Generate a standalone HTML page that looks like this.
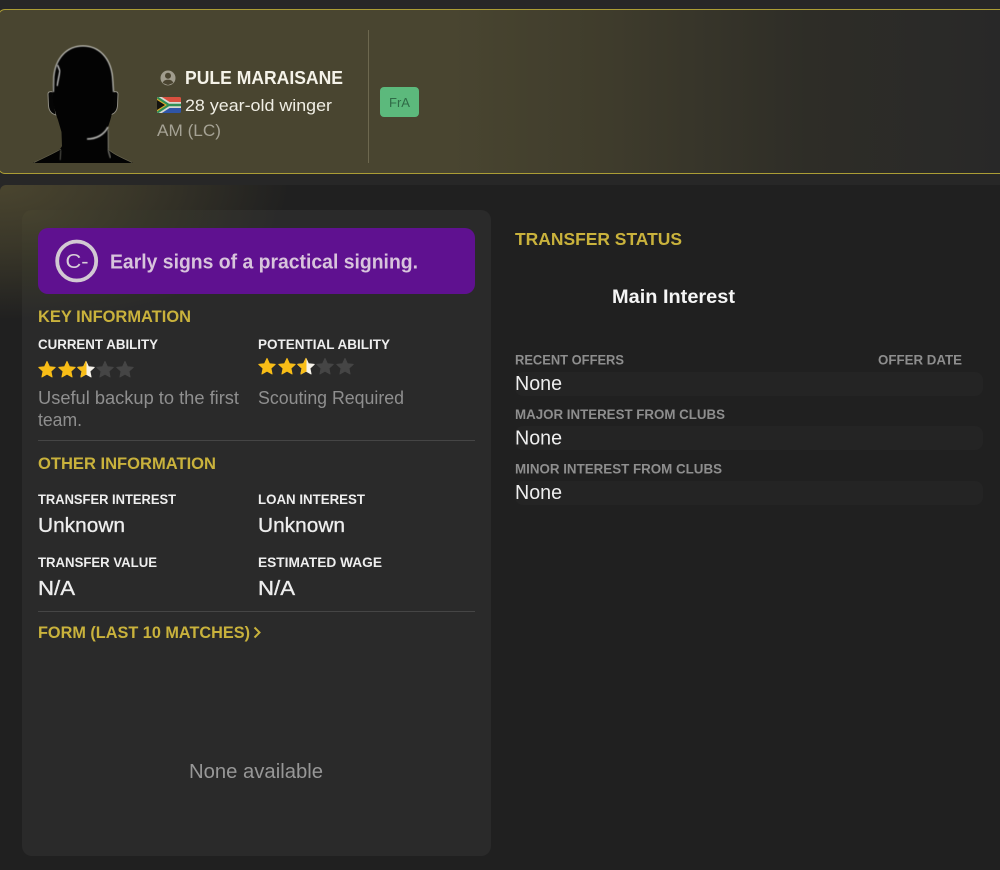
<!DOCTYPE html>
<html><head><meta charset="utf-8"><style>
html,body{margin:0;padding:0;width:1000px;height:870px;overflow:hidden;background:#272727}
.a{position:absolute}
text{font-family:"Liberation Sans",sans-serif}
.b{font-weight:bold}
</style></head><body>
<div class="a" style="left:-2px;top:9px;width:1010px;height:163px;border:1px solid #ab9d35;border-radius:7px;background:linear-gradient(90deg,#494530 0,#494530 45%,#3f3c2c 60%,#2e2d27 80%,#282828 100%)"></div>
<div class="a" style="left:0;top:185px;width:1000px;height:685px;background:radial-gradient(ellipse 290px 135px at 0 0,#4a452f 0,#3a3729 45%,#202020 100%),#202020;border-top-left-radius:6px"></div>
<div class="a" style="left:22px;top:210px;width:469px;height:646px;border-radius:10px;background:radial-gradient(ellipse 260px 110px at 0 0,#47432f 0,#363529 50%,#2a2a2a 100%),#2a2a2a"></div>
<div class="a" style="left:38px;top:228px;width:437px;height:66px;border-radius:10px;background:#5f1190"></div>
<div class="a" style="left:38px;top:440px;width:437px;height:1px;background:#454545"></div>
<div class="a" style="left:38px;top:611px;width:437px;height:1px;background:#454545"></div>
<div class="a" style="left:515px;top:372px;width:468px;height:24px;border-radius:8px;background:#242424"></div>
<div class="a" style="left:515px;top:426px;width:468px;height:24px;border-radius:8px;background:#242424"></div>
<div class="a" style="left:515px;top:481px;width:468px;height:24px;border-radius:8px;background:#242424"></div>
<div class="a" style="left:368px;top:30px;width:1px;height:133px;background:#6d684f"></div>
<div class="a" style="left:380px;top:87px;width:39px;height:30px;border-radius:4px;background:#5cb97c"></div>

<svg class="a" style="left:0;top:0" width="1000" height="870" viewBox="0 0 1000 870">
<defs>
<clipPath id="fl"><rect x="157" y="97" width="24" height="16" rx="1.5"/></clipPath>
<filter id="bl"><feGaussianBlur stdDeviation=".6"/></filter>
<polygon id="st" stroke-linejoin="round" stroke-width="1" points="0,-8.600 2.400,-3.300 8.200,-2.660 3.900,1.260 5.050,6.950 0,4.100 -5.050,6.950 -3.900,1.260 -8.200,-2.660 -2.400,-3.300"/>
<clipPath id="h1"><rect x="-10" y="-10" width="10.500" height="20"/></clipPath>
</defs>

<!-- head -->
<path d="M53 92C50 91 48 92 48 94L48.500 106C49 111 52 114 56 115Z" fill="#050505" stroke="#8f8d82" stroke-width="1"/>
<path d="M113 92C116 91 118 92 118 94L117.500 106C117 111 114 114 110 115Z" fill="#050505" stroke="#8f8d82" stroke-width="1"/>
<path d="M83 46C67 46 55 58 53.500 77L52.500 93C53 104 55 112 58 120L61.500 132 62 146C60 151 52 154 33 163H133C119 157 111 153 108 148L107.500 128C110 122 112 115 113 106L114 93 112.500 77C111 58 99 46 83 46Z" fill="#030303"/>
<path d="M53.500 92L53.800 77C55.500 58 67 46 83 46C99 46 110.500 58 112.500 77L113.500 92" fill="none" stroke="#e2e2dc" stroke-width="1" filter="url(#bl)"/>
<path d="M57.500 65L60 71 57 86" fill="none" stroke="#cfcfcf" stroke-width="1.300" filter="url(#bl)"/>
<path d="M87 139C96 139 104 135 108 127" fill="none" stroke="#b5b5b2" stroke-width="1.600" filter="url(#bl)"/>
<path d="M108 130L108 150L110.500 158" fill="none" stroke="#6e6e68" stroke-width="1.400" filter="url(#bl)"/>
<path d="M61 150L60 160" fill="none" stroke="#55554e" stroke-width="1.200" filter="url(#bl)"/>
<path d="M34 162.500C50 155 56 152 61 149M132 162.500C118 156 112 153 108 149" fill="none" stroke="#66634f" stroke-width=".7"/>

<!-- person icon -->
<circle cx="168" cy="78" r="7.500" fill="#a09c8d"/>
<circle cx="168" cy="75.800" r="3" fill="#4a4430"/>
<path d="M162.800 83C163.500 80.500 165.500 79.800 168 79.800S172.500 80.500 173.200 83L168 85Z" fill="#4a4430"/>

<!-- flag -->
<g clip-path="url(#fl)">
<rect x="157" y="97" width="24" height="8" fill="#d9503f"/>
<rect x="157" y="105" width="24" height="8" fill="#2f55a8"/>
<path d="M157 96L169 103.800H181V106.200H169L157 114" fill="none" stroke="#d8d8d0" stroke-width="3.600"/>
<path d="M157 96L169 103.800H181V106.200H169L157 114Z" fill="#2f8f55"/>
<path d="M157 98.500L167 105 157 111.500Z" fill="#d9ab2c"/>
<path d="M157 100L165 105 157 110Z" fill="#141410"/>
</g>

<text class="b" x="185" y="84" font-size="18" fill="#f5f3e9" textLength="158" lengthAdjust="spacingAndGlyphs">PULE MARAISANE</text>
<text x="185" y="111" font-size="17" fill="#f0eee4" textLength="147" lengthAdjust="spacingAndGlyphs">28 year-old winger</text>
<text x="157" y="136" font-size="17" fill="#a5a294" textLength="64" lengthAdjust="spacingAndGlyphs">AM (LC)</text>
<text x="389" y="107" font-size="13" fill="#2f6b47" textLength="21" lengthAdjust="spacingAndGlyphs">FrA</text>

<!-- grade -->
<circle cx="76.700" cy="261" r="19.500" fill="none" stroke="#d2c9d3" stroke-width="3.800"/>
<text x="65.500" y="268" font-size="20" fill="#d8cfd8" textLength="23" lengthAdjust="spacingAndGlyphs">C-</text>
<text class="b" x="110" y="268.500" font-size="20" fill="#d8c4dc" textLength="308" lengthAdjust="spacingAndGlyphs">Early signs of a practical signing.</text>

<g class="b" fill="#c9b23c" font-weight="bold">
<text x="38" y="322" font-size="16.500" textLength="153" lengthAdjust="spacingAndGlyphs">KEY INFORMATION</text>
<text x="38" y="469" font-size="16.500" textLength="178" lengthAdjust="spacingAndGlyphs">OTHER INFORMATION</text>
<text x="38" y="638" font-size="16.500" textLength="212" lengthAdjust="spacingAndGlyphs">FORM (LAST 10 MATCHES)</text>
<text x="515" y="245" font-size="17.500" textLength="167" lengthAdjust="spacingAndGlyphs">TRANSFER STATUS</text>
</g>
<path d="M254.500 627.500L259.500 632.500 254.500 637.500" fill="none" stroke="#c9b23c" stroke-width="2"/>

<g font-weight="bold" font-size="13.500" fill="#eeeeee">
<text x="38" y="349" textLength="120" lengthAdjust="spacingAndGlyphs">CURRENT ABILITY</text>
<text x="258" y="349" textLength="132" lengthAdjust="spacingAndGlyphs">POTENTIAL ABILITY</text>
<text x="38" y="504" textLength="138" lengthAdjust="spacingAndGlyphs">TRANSFER INTEREST</text>
<text x="258" y="504" textLength="107" lengthAdjust="spacingAndGlyphs">LOAN INTEREST</text>
<text x="38" y="567" textLength="119" lengthAdjust="spacingAndGlyphs">TRANSFER VALUE</text>
<text x="258" y="567" textLength="124" lengthAdjust="spacingAndGlyphs">ESTIMATED WAGE</text>
</g>

<!-- stars -->
<g fill="#454545" stroke="#454545">
<use href="#st" x="105" y="370"/><use href="#st" x="125" y="370"/>
<use href="#st" x="325" y="367"/><use href="#st" x="345" y="367"/>
</g>
<g fill="#f5f2ea" stroke="#f5f2ea">
<use href="#st" x="86" y="370"/><use href="#st" x="306" y="367"/>
</g>
<g fill="#f8bd17" stroke="#f8bd17">
<use href="#st" x="47" y="370"/><use href="#st" x="67" y="370"/>
<use href="#st" x="267" y="367"/><use href="#st" x="287" y="367"/>
<g clip-path="url(#h1)" transform="translate(86 370)"><use href="#st"/></g>
<g clip-path="url(#h1)" transform="translate(306 367)"><use href="#st"/></g>
</g>

<g font-size="18" fill="#8f8f8f">
<text x="38" y="404" textLength="201" lengthAdjust="spacingAndGlyphs">Useful backup to the first</text>
<text x="38" y="426" textLength="44" lengthAdjust="spacingAndGlyphs">team.</text>
<text x="258" y="404" textLength="146" lengthAdjust="spacingAndGlyphs">Scouting Required</text>
</g>

<g font-size="20" fill="#eeeeee" stroke="#eeeeee" stroke-width=".3">
<text x="38" y="532" textLength="87" lengthAdjust="spacingAndGlyphs">Unknown</text>
<text x="258" y="532" textLength="87" lengthAdjust="spacingAndGlyphs">Unknown</text>
<text x="38" y="595" textLength="37" lengthAdjust="spacingAndGlyphs">N/A</text>
<text x="258" y="595" textLength="37" lengthAdjust="spacingAndGlyphs">N/A</text>
</g>
<text x="189" y="778" font-size="20" fill="#979797" textLength="134" lengthAdjust="spacingAndGlyphs">None available</text>

<text x="612" y="303" font-size="19" font-weight="bold" fill="#f5f5f5" textLength="123" lengthAdjust="spacingAndGlyphs">Main Interest</text>
<g font-weight="bold" font-size="13.500" fill="#8e8e8e">
<text x="515" y="364.500" textLength="109" lengthAdjust="spacingAndGlyphs">RECENT OFFERS</text>
<text x="878" y="364.500" textLength="84" lengthAdjust="spacingAndGlyphs">OFFER DATE</text>
<text x="515" y="419" textLength="210" lengthAdjust="spacingAndGlyphs">MAJOR INTEREST FROM CLUBS</text>
<text x="515" y="473.500" textLength="207" lengthAdjust="spacingAndGlyphs">MINOR INTEREST FROM CLUBS</text>
</g>
<g font-size="20" fill="#eeeeee">
<text x="515" y="390" textLength="47" lengthAdjust="spacingAndGlyphs">None</text>
<text x="515" y="444.500" textLength="47" lengthAdjust="spacingAndGlyphs">None</text>
<text x="515" y="499" textLength="47" lengthAdjust="spacingAndGlyphs">None</text>
</g>
</svg>
</body></html>
